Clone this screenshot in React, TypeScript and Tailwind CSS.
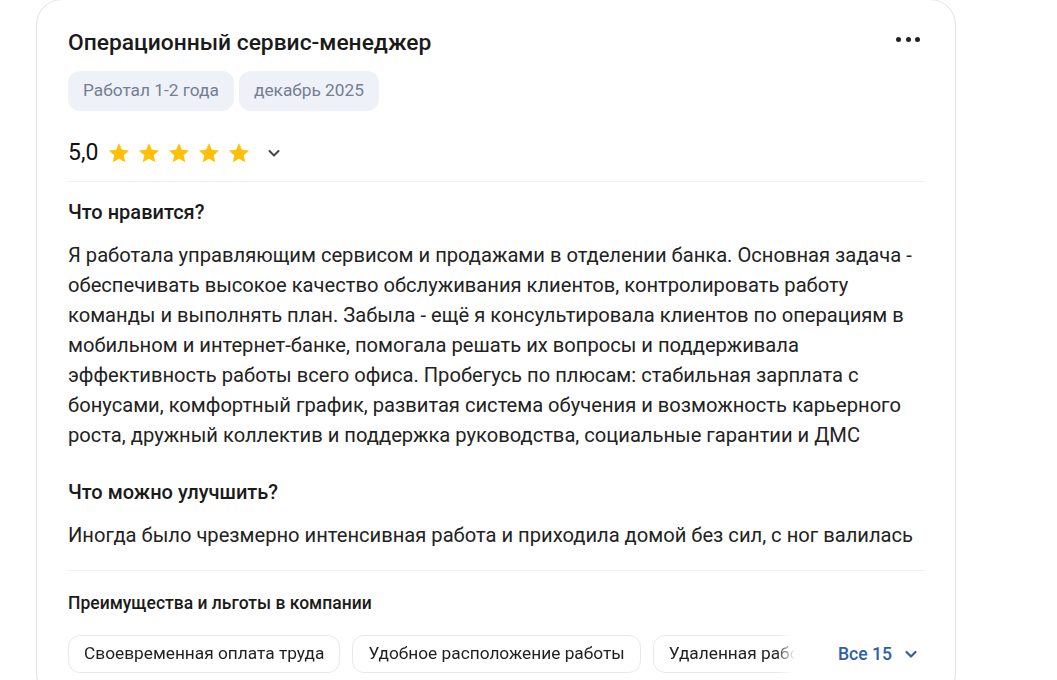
import React from "react";

const Star = () => (
  <svg width="24" height="24" viewBox="0 0 24 24" className="shrink-0">
    <path
      d="M12 2.2l2.95 6.6 7.2.7-5.45 4.8 1.6 7.05L12 17.65 5.7 21.35l1.6-7.05L1.85 9.5l7.2-.7z"
      fill="#FFC107"
    />
  </svg>
);

const Chevron = ({ color = "#333", size = 16, sw = 2 }: { color?: string; size?: number; sw?: number }) => (
  <svg width={size} height={size} viewBox="0 0 16 16" fill="none">
    <path d="M3.5 6l4.5 4.5L12.5 6" stroke={color} strokeWidth={sw} strokeLinecap="round" strokeLinejoin="round" />
  </svg>
);

const lines = [
  "Я работала управляющим сервисом и продажами в отделении банка. Основная задача -",
  "обеспечивать высокое качество обслуживания клиентов, контролировать работу",
  "команды и выполнять план. Забыла - ещё я консультировала клиентов по операциям в",
  "мобильном и интернет-банке, помогала решать их вопросы и поддерживала",
  "эффективность работы всего офиса. Пробегусь по плюсам: стабильная зарплата с",
  "бонусами, комфортный график, развитая система обучения и возможность карьерного",
  "роста, дружный коллектив и поддержка руководства, социальные гарантии и ДМС",
];

export default function App() {
  return (
    <div className="w-[1057px] h-[680px] bg-white overflow-hidden" style={{ fontFamily: "Roboto, 'Noto Sans', sans-serif" }}>
      <div className="ml-[36px] -mt-[1px] w-[920px] h-[700px] border border-[#dfe3eb] rounded-[26px] bg-white pl-[31px] pr-[30px] pt-[28px] text-[#1f1f1f]">
        <div className="flex items-start justify-between">
          <h1 className="text-[22.8px] leading-[30px] font-medium text-[#1a1a1a]">Операционный сервис-менеджер</h1>
          <div className="flex items-center gap-[4.5px] pt-[9px] pr-[5px]">
            <span className="w-[5px] h-[5px] rounded-full bg-[#222]" />
            <span className="w-[5px] h-[5px] rounded-full bg-[#222]" />
            <span className="w-[5px] h-[5px] rounded-full bg-[#222]" />
          </div>
        </div>
        <div className="flex gap-[5px] mt-[13px]">
          <span className="h-[40px] px-[15px] flex items-center rounded-[12px] bg-[#eef1f8] text-[17.3px] text-[#737f92]">Работал 1-2 года</span>
          <span className="h-[40px] px-[15px] flex items-center rounded-[12px] bg-[#eef1f8] text-[17.3px] text-[#737f92]">декабрь 2025</span>
        </div>
        <div className="flex items-center mt-[27px] h-[30px]">
          <span className="text-[23px] text-[#111] mr-[9px]">5,0</span>
          <div className="flex gap-[6px]">
            <Star />
            <Star />
            <Star />
            <Star />
            <Star />
          </div>
          <span className="ml-[15px] flex items-center">
            <Chevron color="#444" size={16} />
          </span>
        </div>
        <div className="mt-[13px] border-t border-[#eef0f4]" />
        <h2 className="mt-[18px] text-[20px] leading-[24px] font-medium text-[#1a1a1a]">Что нравится?</h2>
        <p className="mt-[16px] text-[20.15px] leading-[30px] text-[#222] whitespace-nowrap">
          {lines.map((l, i) => (
            <React.Fragment key={i}>
              {l}
              {i < lines.length - 1 && <br />}
            </React.Fragment>
          ))}
        </p>
        <h2 className="mt-[30px] text-[20px] leading-[24px] font-medium text-[#1a1a1a]">Что можно улучшить?</h2>
        <p className="mt-[16px] text-[20.15px] leading-[30px] text-[#222] whitespace-nowrap">
          Иногда было чрезмерно интенсивная работа и приходила домой без сил, с ног валилась
        </p>
        <div className="mt-[20px] border-t border-[#eef0f4]" />
        <h3 className="mt-[21px] text-[17.5px] leading-[22px] font-medium text-[#1a1a1a]">Преимущества и льготы в компании</h3>
        <div className="mt-[21px] flex items-center">
          <div
            className="flex gap-[12px] w-[727px] overflow-hidden shrink-0"
            style={{ WebkitMaskImage: "linear-gradient(to right, #000 708px, transparent 727px)", maskImage: "linear-gradient(to right, #000 708px, transparent 727px)" }}
          >
            <span className="h-[38px] px-[15px] flex items-center rounded-[12px] border border-[#e6e8ee] text-[17.3px] text-[#1f1f1f] whitespace-nowrap shrink-0">Своевременная оплата труда</span>
            <span className="h-[38px] px-[15px] flex items-center rounded-[12px] border border-[#e6e8ee] text-[17.3px] text-[#1f1f1f] whitespace-nowrap shrink-0">Удобное расположение работы</span>
            <span className="h-[38px] px-[15px] flex items-center rounded-[12px] border border-[#e6e8ee] text-[17.3px] text-[#1f1f1f] whitespace-nowrap shrink-0">Удаленная работа</span>
          </div>
          <div className="ml-[43px] flex items-center gap-[11px] text-[17.6px] font-medium text-[#2f5ea8]">
            <span>Все 15</span>
            <Chevron color="#2f5ea8" size={16} sw={2.2} />
          </div>
        </div>
      </div>
    </div>
  );
}
